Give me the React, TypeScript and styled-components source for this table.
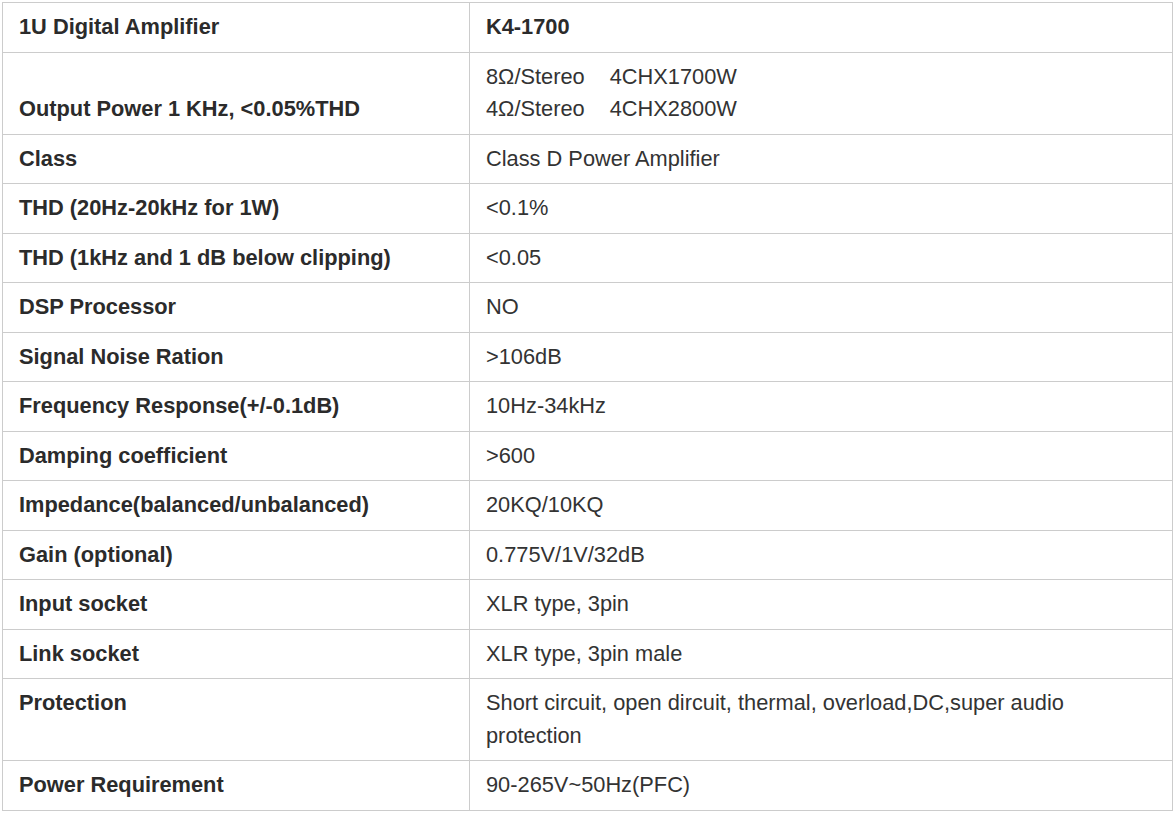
import React from "react";
import styled, { createGlobalStyle } from "styled-components";

const GlobalStyle = createGlobalStyle`
  html, body {
    margin: 0;
    padding: 0;
    background: #ffffff;
  }
  body {
    font-family: "Liberation Sans", Arial, sans-serif;
    color: #333333;
  }
`;

const Page = styled.div`
  padding: 2px 0 0 2px;
`;

const SpecTable = styled.table`
  width: 1171px;
  border-collapse: collapse;
  table-layout: fixed;
  font-family: "Liberation Sans", Arial, sans-serif;
  font-size: 21.8px;
  line-height: 32.5px;
  color: #333333;
`;

const Cell = styled.td<{ $label?: boolean }>`
  border: 1px solid #cccccc;
  padding: 8px 16px;
  vertical-align: top;
  text-align: left;
  font-weight: ${(p) => (p.$label ? 700 : 400)};
  color: ${(p) => (p.$label ? "#2b2b2b" : "#333333")};
  word-wrap: break-word;
`;

const Gap = styled.span`
  display: inline-block;
  width: 25px;
`;

type Row = { label: React.ReactNode; value: React.ReactNode; bold?: boolean };

const rows: Row[] = [
  { label: "1U Digital Amplifier", value: "K4-1700", bold: true },
  {
    label: (
      <>
        <br />
        Output Power 1 KHz, &lt;0.05%THD
      </>
    ),
    value: (
      <>
        8Ω/Stereo<Gap />4CHX1700W
        <br />
        4Ω/Stereo<Gap />4CHX2800W
      </>
    ),
  },
  { label: "Class", value: "Class D Power Amplifier" },
  { label: "THD (20Hz-20kHz for 1W)", value: "<0.1%" },
  { label: "THD (1kHz and 1 dB below clipping)", value: "<0.05" },
  { label: "DSP Processor", value: "NO" },
  { label: "Signal Noise Ration", value: ">106dB" },
  { label: "Frequency Response(+/-0.1dB)", value: "10Hz-34kHz" },
  { label: "Damping coefficient", value: ">600" },
  { label: "Impedance(balanced/unbalanced)", value: "20KQ/10KQ" },
  { label: "Gain (optional)", value: "0.775V/1V/32dB" },
  { label: "Input socket", value: "XLR type, 3pin" },
  { label: "Link socket", value: "XLR type, 3pin male" },
  {
    label: "Protection",
    value: "Short circuit, open dircuit, thermal, overload,DC,super audio protection",
  },
  { label: "Power Requirement", value: "90-265V~50Hz(PFC)" },
];

export default function App() {
  return (
    <>
      <GlobalStyle />
      <Page>
        <SpecTable>
          <colgroup>
            <col style={{ width: "467px" }} />
            <col />
          </colgroup>
          <tbody>
            {rows.map((r, i) => (
              <tr key={i}>
                <Cell $label>{r.label}</Cell>
                <Cell $label={r.bold}>{r.value}</Cell>
              </tr>
            ))}
          </tbody>
        </SpecTable>
      </Page>
    </>
  );
}
